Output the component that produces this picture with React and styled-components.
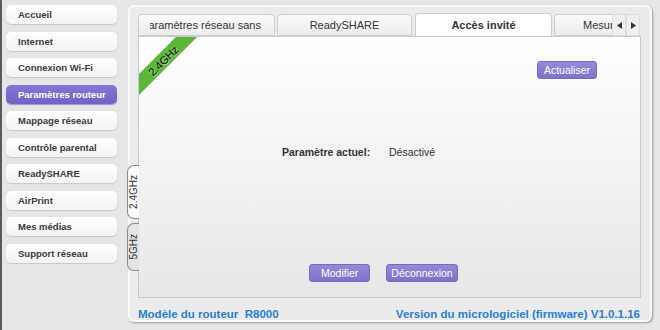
import React from 'react';
import styled, { createGlobalStyle } from 'styled-components';

const GlobalStyle = createGlobalStyle`
  html, body {
    margin: 0;
    padding: 0;
    background: #e6e6e6;
    font-family: "Liberation Sans", Arial, sans-serif;
  }
`;

const Page = styled.div`
  display: flex;
  width: 660px;
  height: 330px;
  box-sizing: border-box;
  border-left: 2px solid #5a5a5a;
  background: #e6e6e6;
  overflow: hidden;
`;

const Sidebar = styled.nav`
  display: flex;
  flex-direction: column;
  gap: 7.5px;
  width: 116px;
  flex-shrink: 0;
  padding: 5px 0 0 4px;
  box-sizing: border-box;
`;

const NavButton = styled.div`
  display: flex;
  align-items: center;
  height: 19px;
  width: 111px;
  padding-left: 12px;
  box-sizing: border-box;
  border-radius: 5px;
  font-size: 9.5px;
  font-weight: 700;
  color: ${({ $active }) => ($active ? '#fff' : '#3a3a3a')};
  background: ${({ $active }) =>
    $active
      ? 'linear-gradient(#8378d6, #6e63c6)'
      : 'linear-gradient(#ffffff, #f3f3f3)'};
  box-shadow: ${({ $active }) =>
    $active ? '0 1px 1px #9b93d6' : '0 1px 1px #c6c6c6, 0 0 1px #d0d0d0'};
`;

const Panel = styled.section`
  display: flex;
  flex: 1;
  margin: 5px 8px 8px 10px;
  border: 2px solid #fafafa;
  border-radius: 6px;
  background: #ebebeb;
  box-shadow: 1px 1px 2px #9a9a9a;
`;

const SideTabs = styled.div`
  display: flex;
  flex-direction: column;
  gap: 4px;
  width: 8px;
  padding-top: 158px;
`;

const SideTab = styled.div`
  display: flex;
  align-items: center;
  justify-content: center;
  width: 12px;
  height: ${({ $h }) => $h}px;
  margin-left: -3px;
  box-sizing: border-box;
  border: 1px solid #8a8a8a;
  border-right: none;
  border-radius: 7px 0 0 7px;
  background: ${({ $active }) => ($active ? '#fafafa' : '#e4e4e4')};
  font-size: 10px;
  color: #333;
  z-index: 1;
  span {
    writing-mode: vertical-rl;
    transform: rotate(180deg);
  }
`;

const Main = styled.div`
  display: flex;
  flex-direction: column;
  flex: 1;
  padding: 6px 9px 0 0;
  min-width: 0;
`;

const TabBar = styled.div`
  display: flex;
  height: 23px;
`;

const TabStrip = styled.div`
  display: flex;
  align-items: flex-end;
  width: 474px;
  overflow: hidden;
`;

const Tab = styled.div`
  display: flex;
  align-items: center;
  flex-shrink: 0;
  width: ${({ $w }) => $w}px;
  margin-right: ${({ $gap }) => $gap}px;
  height: ${({ $active }) => ($active ? 23 : 22)}px;
  padding: 0 11px;
  box-sizing: border-box;
  border: 1px solid #cdcdcd;
  border-bottom: ${({ $active }) => ($active ? 'none' : '1px solid #cdcdcd')};
  border-radius: 4px 4px 0 0;
  background: ${({ $active }) =>
    $active ? '#ffffff' : 'linear-gradient(#fbfbfb, #ececec)'};
  font-size: 11px;
  font-weight: ${({ $active }) => ($active ? 700 : 400)};
  color: #333;
  white-space: nowrap;
  overflow: hidden;
`;

const TabLabel = styled.div`
  display: flex;
  justify-content: center;
  width: 100%;
  overflow: hidden;
  span {
    flex-shrink: 0;
  }
`;

const Arrows = styled.div`
  display: flex;
  align-items: flex-end;
`;

const ArrowButton = styled.div`
  display: flex;
  align-items: center;
  justify-content: center;
  width: 14px;
  height: 22px;
  box-sizing: border-box;
  border: 1px solid #dcdcdc;
  background: #efefef;
  svg {
    display: block;
  }
`;

const Content = styled.div`
  position: relative;
  display: flex;
  flex-direction: column;
  height: 262px;
  box-sizing: border-box;
  border: 1px solid #cacaca;
  background: linear-gradient(#ffffff, #e7e7e7);
  overflow: hidden;
`;

const Ribbon = styled.div`
  position: absolute;
  left: -26px;
  top: 16px;
  width: 100px;
  height: 15px;
  display: flex;
  align-items: center;
  justify-content: center;
  background: #5cb738;
  transform: rotate(-45deg);
  font-size: 11px;
  color: #000;
  text-shadow: 0 1px 1px rgba(255, 255, 255, 0.7);
`;

const RefreshRow = styled.div`
  display: flex;
  justify-content: flex-end;
  padding: 24px 43px 0 0;
`;

const PurpleButton = styled.button`
  height: 18px;
  padding: 0 ${({ $pad }) => $pad}px;
  border: 1px solid #7469c4;
  border-radius: 3px;
  background: linear-gradient(#928ad9, #7c72cd);
  color: #fff;
  font-family: "Liberation Sans", Arial, sans-serif;
  font-size: 10.5px;
  line-height: 16px;
`;

const StatusRow = styled.div`
  display: flex;
  align-items: center;
  height: 16px;
  margin-top: 65px;
  padding-left: 143px;
  font-size: 10.5px;
  color: #333;
`;

const StatusLabel = styled.span`
  width: 107px;
  font-weight: 700;
`;

const ActionRow = styled.div`
  display: flex;
  gap: 16px;
  margin-top: 104px;
  padding-left: 170px;
`;

const Footer = styled.div`
  display: flex;
  justify-content: space-between;
  align-items: center;
  flex: 1;
  padding: 9px 1px 0 0;
  font-size: 11.5px;
  font-weight: 700;
  color: #1f82d8;
  white-space: pre;
`;

const Triangle = ({ dir }) => (
  <svg width="5" height="7" viewBox="0 0 5 7">
    <path d={dir === 'left' ? 'M5 0 L0 3.5 L5 7 Z' : 'M0 0 L5 3.5 L0 7 Z'} fill="#333" />
  </svg>
);

const navItems = [
  'Accueil',
  'Internet',
  'Connexion Wi-Fi',
  'Paramètres routeur',
  'Mappage réseau',
  'Contrôle parental',
  'ReadySHARE',
  'AirPrint',
  'Mes médias',
  'Support réseau',
];

const tabs = [
  { label: 'Paramètres réseau sans fil', w: 137, gap: 2 },
  { label: 'ReadySHARE', w: 135, gap: 3 },
  { label: 'Accès invité', w: 137, gap: 2, active: true },
  { label: 'Mesure du trafic', w: 137, gap: 0 },
];

const App = () => (
  <>
    <GlobalStyle />
    <Page>
      <Sidebar>
        {navItems.map((item) => (
          <NavButton key={item} $active={item === 'Paramètres routeur'}>
            {item}
          </NavButton>
        ))}
      </Sidebar>
      <Panel>
        <SideTabs>
          <SideTab $h={54} $active><span>2.4GHz</span></SideTab>
          <SideTab $h={48}><span>5GHz</span></SideTab>
        </SideTabs>
        <Main>
          <TabBar>
            <TabStrip>
              {tabs.map((t) => (
                <Tab key={t.label} $w={t.w} $gap={t.gap} $active={t.active}>
                  <TabLabel><span>{t.label}</span></TabLabel>
                </Tab>
              ))}
            </TabStrip>
            <Arrows>
              <ArrowButton><Triangle dir="left" /></ArrowButton>
              <ArrowButton><Triangle dir="right" /></ArrowButton>
            </Arrows>
          </TabBar>
          <Content>
            <Ribbon>2.4GHz</Ribbon>
            <RefreshRow>
              <PurpleButton $pad={6}>Actualiser</PurpleButton>
            </RefreshRow>
            <StatusRow>
              <StatusLabel>Paramètre actuel:</StatusLabel>
              <span>Désactivé</span>
            </StatusRow>
            <ActionRow>
              <PurpleButton $pad={11}>Modifier</PurpleButton>
              <PurpleButton $pad={4}>Déconnexion</PurpleButton>
            </ActionRow>
          </Content>
          <Footer>
            <span>{'Modèle du routeur  R8000'}</span>
            <span>Version du micrologiciel (firmware) V1.0.1.16</span>
          </Footer>
        </Main>
      </Panel>
    </Page>
  </>
);

export default App;
